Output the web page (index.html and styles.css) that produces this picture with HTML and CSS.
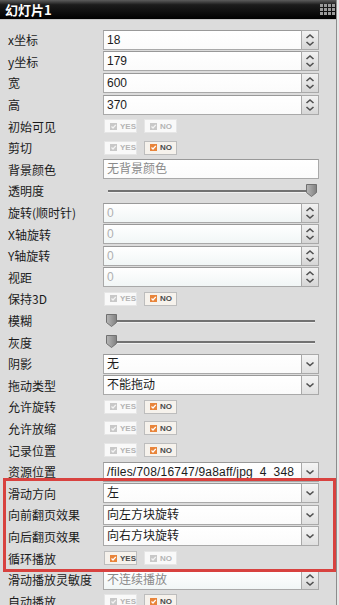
FILE: index.html
```html
<!DOCTYPE html>
<html lang="zh-CN">
<head>
  <meta charset="UTF-8">
  <meta name="viewport" content="width=device-width, initial-scale=1.0">
  <title>幻灯片1</title>
  <link rel="stylesheet" href="styles.css">
</head>
<body>
  <div class="panel">
    <div class="titlebar">
      <span class="title">幻灯片1</span>
      <svg class="grip" width="15" height="13" viewBox="0 0 15 13">
        <g fill="#9a9a9a">
          <rect x="0" y="1" width="3" height="3"/><rect x="4" y="1" width="3" height="3"/><rect x="8" y="1" width="3" height="3"/><rect x="12" y="1" width="3" height="3"/>
          <rect x="0" y="5" width="3" height="3"/><rect x="4" y="5" width="3" height="3"/><rect x="8" y="5" width="3" height="3"/><rect x="12" y="5" width="3" height="3"/>
          <rect x="0" y="9" width="3" height="3"/><rect x="4" y="9" width="3" height="3"/><rect x="8" y="9" width="3" height="3"/><rect x="12" y="9" width="3" height="3"/>
        </g>
      </svg>
    </div>

    <div class="props">
      <span class="label">x坐标</span>
      <div class="field"><span class="text">18</span><span class="spinner"></span></div>

      <span class="label">y坐标</span>
      <div class="field"><span class="text">179</span><span class="spinner"></span></div>

      <span class="label">宽</span>
      <div class="field"><span class="text">600</span><span class="spinner"></span></div>

      <span class="label">高</span>
      <div class="field"><span class="text">370</span><span class="spinner"></span></div>

      <span class="label">初始可见</span>
      <div class="toggles"><span class="toggle">YES</span><span class="toggle">NO</span></div>

      <span class="label">剪切</span>
      <div class="toggles"><span class="toggle">YES</span><span class="toggle on">NO</span></div>

      <span class="label">背景颜色</span>
      <div class="field"><span class="text muted">无背景颜色</span></div>

      <span class="label">透明度</span>
      <div class="slider at-end"><span class="track"></span><span class="thumb"></span></div>

      <span class="label">旋转(顺时针)</span>
      <div class="field soft"><span class="text dim">0</span><span class="spinner"></span></div>

      <span class="label">X轴旋转</span>
      <div class="field soft"><span class="text dim">0</span><span class="spinner"></span></div>

      <span class="label">Y轴旋转</span>
      <div class="field soft"><span class="text dim">0</span><span class="spinner"></span></div>

      <span class="label">视距</span>
      <div class="field soft"><span class="text dim">0</span><span class="spinner"></span></div>

      <span class="label">保持3D</span>
      <div class="toggles"><span class="toggle">YES</span><span class="toggle on">NO</span></div>

      <span class="label">模糊</span>
      <div class="slider"><span class="track"></span><span class="thumb"></span></div>

      <span class="label">灰度</span>
      <div class="slider"><span class="track"></span><span class="thumb"></span></div>

      <span class="label">阴影</span>
      <div class="field"><span class="text">无</span><span class="drop"></span></div>

      <span class="label">拖动类型</span>
      <div class="field"><span class="text">不能拖动</span><span class="drop"></span></div>

      <span class="label">允许旋转</span>
      <div class="toggles"><span class="toggle">YES</span><span class="toggle on">NO</span></div>

      <span class="label">允许放缩</span>
      <div class="toggles"><span class="toggle">YES</span><span class="toggle on">NO</span></div>

      <span class="label">记录位置</span>
      <div class="toggles"><span class="toggle">YES</span><span class="toggle on">NO</span></div>

      <span class="label">资源位置</span>
      <div class="field"><span class="text path">/files/708/16747/9a8aff/jpg_4_348</span><span class="drop"></span></div>

      <span class="label">滑动方向</span>
      <div class="field"><span class="text">左</span><span class="drop"></span></div>

      <span class="label">向前翻页效果</span>
      <div class="field"><span class="text">向左方块旋转</span><span class="drop"></span></div>

      <span class="label">向后翻页效果</span>
      <div class="field"><span class="text">向右方块旋转</span><span class="drop"></span></div>

      <span class="label">循环播放</span>
      <div class="toggles"><span class="toggle on">YES</span><span class="toggle">NO</span></div>

      <span class="label">滑动播放灵敏度</span>
      <div class="field soft"><span class="text muted">不连续播放</span><span class="spinner"></span></div>

      <span class="label">自动播放</span>
      <div class="toggles"><span class="toggle">YES</span><span class="toggle on">NO</span></div>
    </div>

    <!-- red annotation drawn over the slide settings -->
    <div class="mark"></div>
  </div>
</body>
</html>
```

FILE: styles.css
```css
body {
  margin: 0;
  background: #e7e7e7;
  font-family: "Liberation Sans", "Noto Sans CJK SC", sans-serif;
  font-size: 12px;
  color: #1b1b1b;
}
.panel {
  position: relative;
  width: 337px;
  height: 605px;
  overflow: hidden;
  background: #dcdcdc;
  border-right: 1px solid #8c8c8c;
  box-sizing: border-box;
}
.titlebar {
  height: 19px;
  display: flex;
  align-items: center;
  justify-content: space-between;
  padding: 0 1px 0 5px;
  background: linear-gradient(to bottom, #5c5c5c 0, #1c1c1c 25%, #000 100%);
  border-bottom: 1px solid #c4c4c4;
}
.title {
  color: #fff;
  font-family: "Noto Sans CJK SC", sans-serif;
  font-weight: bold;
  font-size: 13px;
  line-height: 19px;
}
.props {
  display: grid;
  grid-template-columns: 95px 216px;
  grid-auto-rows: 21.6px;
  align-items: center;
  padding: 9px 0 0 8px;
}
.label {
  font-family: "Noto Sans CJK SC", sans-serif;
  font-size: 12px;
  white-space: nowrap;
}
.field {
  display: flex;
  height: 20px;
  box-sizing: border-box;
  border: 1px solid #a9a9a9;
  border-top-color: #999;
  background: linear-gradient(to bottom, #ffffff, #fbfbfb);
}
.field.soft {
  background: linear-gradient(to bottom, #ffffff, #f1f6f6);
}
.text {
  flex: 1;
  padding-left: 3px;
  line-height: 18px;
  white-space: nowrap;
  overflow: hidden;
  font-family: "Liberation Sans", "Noto Sans CJK SC", sans-serif;
  font-size: 12px;
  color: #1b1b1b;
}
.text.path {
  letter-spacing: 0.2px;
}
.text.muted {
  color: #8a8a8a;
}
.text.dim {
  color: #b0b0b0;
}
.spinner,
.drop {
  width: 16px;
  margin: -1px -1px -1px 0;
  border: 1px solid #a9a9a9;
  background-color: #e4e4e4;
  background-repeat: no-repeat;
  background-position: center;
}
.spinner {
  background-image: url("data:image/svg+xml,%3Csvg xmlns='http://www.w3.org/2000/svg' width='16' height='20'%3E%3Cpath d='M4.5 8 L8 5 L11.5 8 M4.5 12 L8 15 L11.5 12' fill='none' stroke='%23505050' stroke-width='1.6'/%3E%3C/svg%3E"),
    linear-gradient(to bottom, #f2f2f2, #d6d6d6);
}
.drop {
  background-image: url("data:image/svg+xml,%3Csvg xmlns='http://www.w3.org/2000/svg' width='16' height='20'%3E%3Cpath d='M4.5 8.5 L8 11.5 L11.5 8.5' fill='none' stroke='%23505050' stroke-width='1.6'/%3E%3C/svg%3E"),
    linear-gradient(to bottom, #f4f4f4, #e0e0e0);
}
.toggles {
  display: flex;
  gap: 7px;
  padding-left: 1px;
}
.toggle {
  display: flex;
  align-items: center;
  gap: 3px;
  width: 33px;
  height: 14px;
  box-sizing: border-box;
  padding-left: 5px;
  border: 1px solid #e6e6e6;
  background: #f9f9f9;
  font-size: 8px;
  font-weight: bold;
  color: #b4b4b4;
}
.toggle::before {
  content: "";
  width: 7px;
  height: 7px;
  background: url("data:image/svg+xml,%3Csvg xmlns='http://www.w3.org/2000/svg' width='7' height='7'%3E%3Crect x='0' y='0' width='7' height='7' fill='%23c8c8c8'/%3E%3Cpath d='M1.5 3.5 L3 5 L5.8 1.8' fill='none' stroke='%23f4f4f4' stroke-width='1.2'/%3E%3C/svg%3E");
}
.toggle.on {
  border-color: #bdbdbd;
  background: #f6f2ec;
  color: #4a4a4a;
}
.toggle.on::before {
  background: url("data:image/svg+xml,%3Csvg xmlns='http://www.w3.org/2000/svg' width='7' height='7'%3E%3Crect x='0' y='0' width='7' height='7' fill='%23e8843a'/%3E%3Cpath d='M1.5 3.5 L3 5 L5.8 1.8' fill='none' stroke='%23fff' stroke-width='1.2'/%3E%3C/svg%3E");
}
.slider {
  position: relative;
  height: 14px;
  margin: 0 4px 0 5px;
}
.track {
  position: absolute;
  left: 0;
  right: 0;
  top: 6px;
  height: 2px;
  background: #727272;
  border-bottom: 1px solid #f0f0f0;
}
.thumb {
  position: absolute;
  top: 0;
  left: -2px;
  width: 11px;
  height: 13px;
  background: url("data:image/svg+xml,%3Csvg xmlns='http://www.w3.org/2000/svg' width='11' height='13'%3E%3Cdefs%3E%3ClinearGradient id='g' x1='0' x2='1'%3E%3Cstop offset='0' stop-color='%23b8b8b8'/%3E%3Cstop offset='1' stop-color='%23808080'/%3E%3C/linearGradient%3E%3C/defs%3E%3Cpath d='M0.5 0.5 H10.5 V8.5 L5.5 12.5 L0.5 8.5 Z' fill='url(%23g)' stroke='%23707070'/%3E%3C/svg%3E");
}
.slider.at-end .thumb {
  left: auto;
  right: -2px;
}
.mark {
  position: absolute;
  left: 3px;
  top: 478px;
  width: 333px;
  height: 94px;
  box-sizing: border-box;
  border: 3px solid #d8423f;
}
```
